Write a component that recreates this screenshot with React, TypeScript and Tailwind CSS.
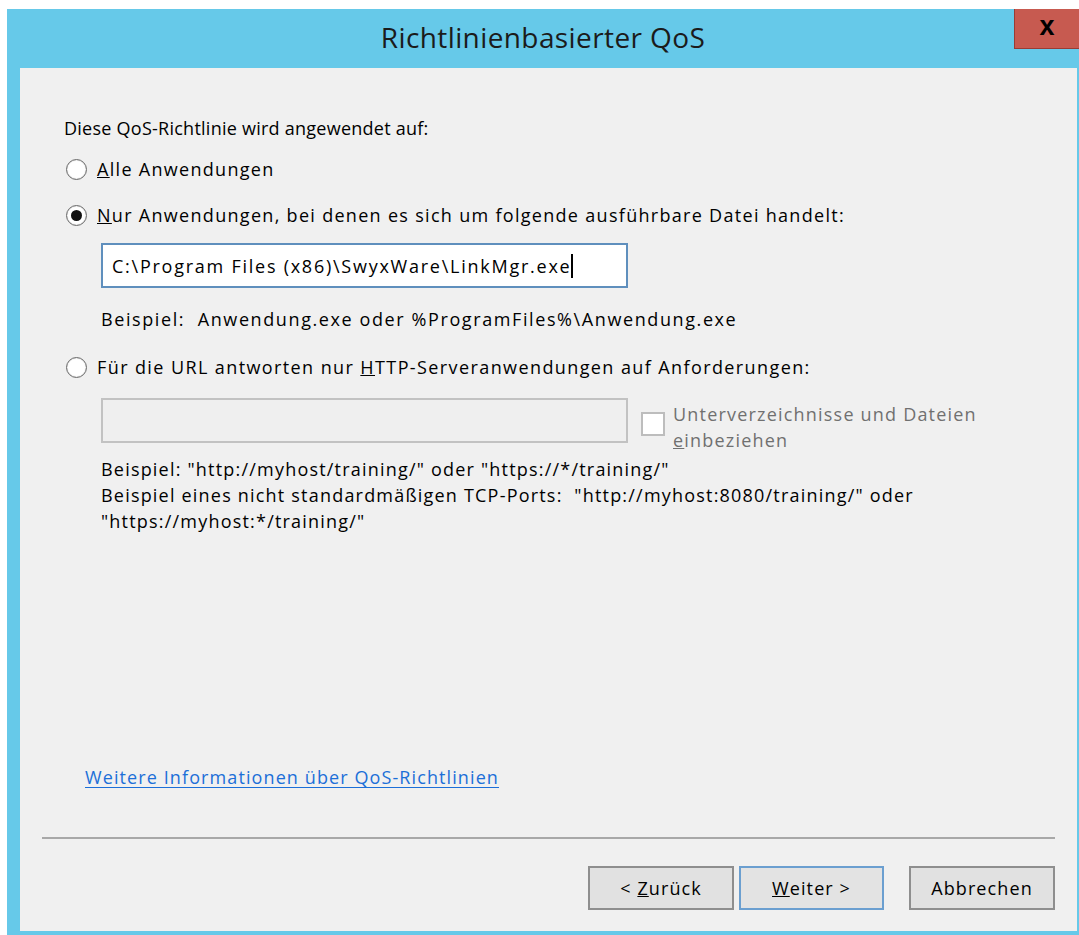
import React from "react";

const font = { fontFamily: '"Open Sans", "Noto Sans", sans-serif' };

function Radio({ checked, children }: { checked?: boolean; children: React.ReactNode }) {
    return (
        <div className="flex items-center h-[26px] pl-[22px]">
            <span className="flex items-center justify-center w-[21px] h-[21px] rounded-full border border-[#6a6a6a] bg-white shadow-[inset_0_0_1px_#999]">
                {checked && <span className="w-[11px] h-[11px] rounded-full bg-[#111]" />}
            </span>
            <span className="ml-[10px]">{children}</span>
        </div>
    );
}

function Button({ focused, children }: { focused?: boolean; children: React.ReactNode }) {
    return (
        <button
            className={
                focused
                    ? "w-[145px] h-[44px] border-2 border-[#6b9fd0] bg-[#e3e3e3] text-[18px] tracking-[1.1px] text-black"
                    : "w-[146px] h-[44px] border-2 border-[#8e8e8e] bg-[#e1e1e1] text-[18px] tracking-[1.1px] text-black"
            }
        >
            {children}
        </button>
    );
}

export default function App() {
    return (
        <div className="w-[1079px] h-[935px] bg-white pt-[9px] pl-[7px]" style={font}>
            <div className="flex flex-col w-[1072px] h-[926px] bg-[#66c9e9]">
                {/* title bar */}
                <div className="grid grid-cols-[65px_1fr_65px] h-[59px]">
                    <div />
                    <div className="flex items-center justify-center pb-[4px] text-[28px] text-[#1b1b1b] tracking-[0.4px]">
                        Richtlinienbasierter QoS
                    </div>
                    <div className="flex items-center justify-center h-[40px] pb-[4px] bg-[#c75a50] border-l border-b border-[#9a3c35] text-[27px] font-bold text-black" style={{ fontFamily: '"Liberation Sans", sans-serif' }}>
                        x
                    </div>
                </div>

                <div className="flex flex-col ml-[13px] mr-[2px] h-[863px] bg-[#f0f0f0] text-[18px] leading-[26px] tracking-[1.3px] text-black">
                    <div className="flex flex-col pl-[24px] pt-[47px]">
                        <div className="pl-[20px] tracking-[0.25px]">Diese QoS-Richtlinie wird angewendet auf:</div>
                        <div className="mt-[15px]">
                            <Radio><span className="underline">A</span>lle Anwendungen</Radio>
                        </div>
                        <div className="mt-[20px]">
                            <Radio checked>
                                <span className="underline">N</span>ur Anwendungen, bei denen es sich um folgende ausführbare Datei handelt:
                            </Radio>
                        </div>
                        <div className="flex items-center mt-[15px] ml-[57px] w-[527px] h-[45px] border-2 border-[#5f8fbd] bg-white pl-[9px] tracking-[1.75px]">
                            <span>C:\Program Files (x86)\SwyxWare\LinkMgr.exe</span>
                            <span className="w-[2px] h-[24px] bg-black" />
                        </div>
                        <div className="mt-[18px] pl-[57px] tracking-[1.6px]">
                            Beispiel:&nbsp; Anwendung.exe oder %ProgramFiles%\Anwendung.exe
                        </div>
                        <div className="mt-[22px] tracking-[1.4px]">
                            <Radio>
                                Für die URL antworten nur <span className="underline">H</span>TTP-Serveranwendungen auf Anforderungen:
                            </Radio>
                        </div>
                        <div className="flex items-start h-[45px] mt-[18px] ml-[57px]">
                            <div className="w-[527px] h-[45px] border-2 border-[#c2c2c2] bg-[#efefef]" />
                            <div className="flex ml-[13px] pt-[11px]">
                                <span className="mt-[3px] w-[24px] h-[24px] border-2 border-[#bdbdbd] bg-white" />
                                <div className="ml-[8px] mt-[-8px] text-[#707070] tracking-[1.2px]">
                                    <div>Unterverzeichnisse und Dateien</div>
                                    <div><span className="underline">e</span>inbeziehen</div>
                                </div>
                            </div>
                        </div>
                        <div className="mt-[13px] pl-[57px] tracking-[1.2px]">
                            <div>Beispiel: "http://myhost/training/" oder "https://*/training/"</div>
                            <div>Beispiel eines nicht standardmäßigen TCP-Ports:&nbsp; "http://myhost:8080/training/" oder</div>
                            <div>"https://myhost:*/training/"</div>
                        </div>
                    </div>

                    <div className="flex-1" />

                    <div className="pl-[65px] tracking-[1.1px]">
                        <a className="text-[#1c6fd8] underline underline-offset-[3px]" href="#">
                            Weitere Informationen über QoS-Richtlinien
                        </a>
                    </div>
                    <div className="mt-[47px] mx-[22px] h-[2px] bg-[#a8a8a8]" />
                    <div className="flex justify-end pr-[22px] mt-[27px] mb-[21px]">
                        <Button>&lt; <span className="underline">Z</span>urück</Button>
                        <div className="ml-[5px]">
                            <Button focused><span className="underline">W</span>eiter &gt;</Button>
                        </div>
                        <div className="ml-[25px]">
                            <Button>Abbrechen</Button>
                        </div>
                    </div>
                </div>
            </div>
        </div>
    );
}
